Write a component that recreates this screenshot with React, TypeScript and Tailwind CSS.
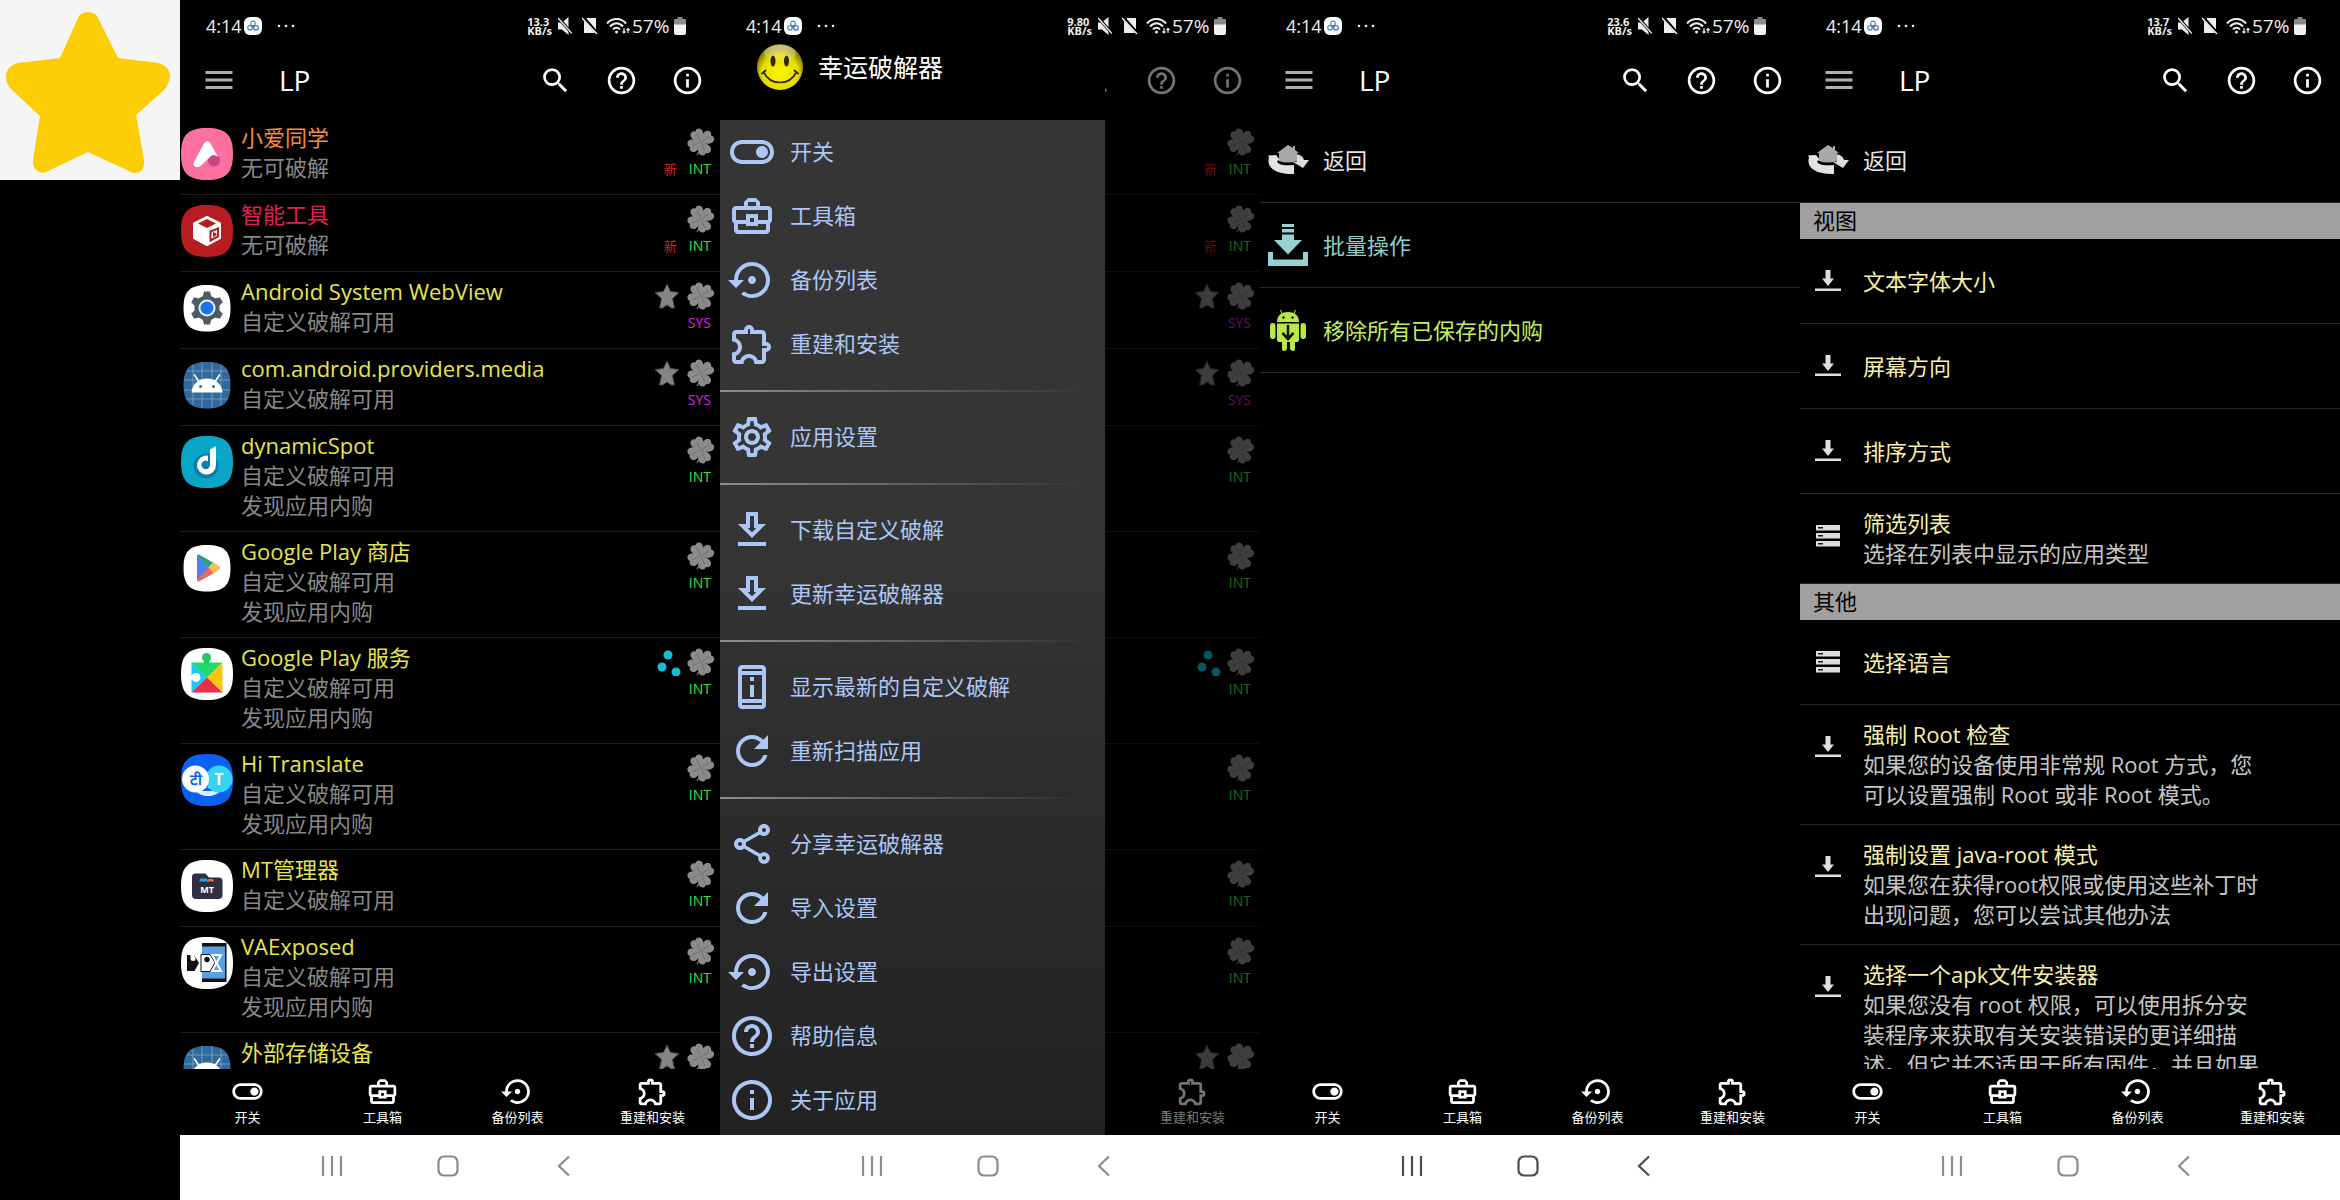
import type { ReactNode } from "react";
import type { IconType } from "react-icons";
import {
  MdHelpOutline,
  MdInfoOutline,
  MdMenu,
  MdOutlineBusinessCenter,
  MdOutlineExtension,
  MdOutlineGetApp,
  MdOutlinePermDeviceInformation,
  MdOutlineSettings,
  MdOutlineShare,
  MdOutlineToggleOn,
  MdRefresh,
  MdSearch,
  MdSettingsBackupRestore,
} from "react-icons/md";

// ---------- app icons (52 x 52) ----------

const squircle = "M26 0C45 0 52 7 52 26S45 52 26 52 0 45 0 26 7 0 26 0Z";
const smallSquircle = "M26 3C43 3 49.500 9 49.500 26S43 49.500 26 49.500 2.500 43 2.500 26 9 3 26 3Z";

const AppIcon = ({ children }: { children: ReactNode }) => (
  <svg viewBox="0 0 52 52" className="size-[52px] shrink-0" aria-hidden="true">
    {children}
  </svg>
);

const XiaoAiIcon = () => (
  <AppIcon>
    <path d={squircle} fill="#fb6fa1" />
    <circle cx="33" cy="32.500" r="6" fill="#c84482" />
    <path
      d="M23 15.500Q26 11 29.500 15.500L37 29Q32 24.500 27.500 30.500L20 37.500Q17 40 14 38.500 12 37 13 34Z"
      fill="#fff"
    />
  </AppIcon>
);

const SmartToolsIcon = () => (
  <AppIcon>
    <path d={squircle} fill="#b71c22" />
    <path d="M26 12l13 6.500v14.500L26 40l-13-7V18.500z" fill="#fff" stroke="#fff" strokeWidth="2" strokeLinejoin="round" />
    <path d="M26 14l9 4.500-9 4.500-9-4.500z" fill="#b71c22" />
    <path d="M29.500 26.500l7.500-3v8l-7.500 4z" fill="#fff" stroke="#b71c22" strokeWidth="2" />
    <path d="M32.500 27.500v4l3-2z" fill="#b71c22" stroke="#b71c22" />
  </AppIcon>
);

const WebViewIcon = () => (
  <AppIcon>
    <path d={smallSquircle} fill="#fff" />
    <g fill="#4d5a64">
      <circle cx="26" cy="26" r="12.500" />
      {[0, 60, 120, 180, 240, 300].map((deg) => (
        <path key={deg} d="M21.500 15.500L23 9.500h6l1.500 6z" transform={`rotate(${deg} 26 26)`} />
      ))}
    </g>
    <circle cx="26" cy="26" r="8.500" fill="#e8eef8" />
    <circle cx="26" cy="26" r="6.500" fill="#1a73e8" />
  </AppIcon>
);

const AndroidGridIcon = () => (
  <AppIcon>
    <path d={smallSquircle} fill="#33689a" />
    <path
      d="M12 6v40M21 3v46M31 3v46M40 6v40M6 12h40M3 21h46M3 31h46M6 40h40"
      stroke="#7ba6cc"
      strokeWidth=".8"
      fill="none"
    />
    <path d="M10.500 33.500c.5-8.500 7-14 15.500-14s15 5.500 15.500 14z" fill="#fff" />
    <path d="M17.500 22l-4-6M34.500 22l4-6" stroke="#fff" strokeWidth="1.600" strokeLinecap="round" />
    <circle cx="19.500" cy="27.500" r="1.500" fill="#33689a" />
    <circle cx="32.500" cy="27.500" r="1.500" fill="#33689a" />
  </AppIcon>
);

const DynamicSpotIcon = () => (
  <AppIcon>
    <path d={squircle} fill="#0aa6c8" />
    <circle cx="25" cy="30" r="12.500" fill="#0b6f9a" opacity=".7" />
    <path d="M29 13.500l6-3.500v19a9.500 9.500 0 1 1-8-9.300v5.500a4.300 4.300 0 1 0 2 3.800z" fill="#fff" />
  </AppIcon>
);

const PlayStoreIcon = () => (
  <AppIcon>
    <path d={smallSquircle} fill="#fff" />
    <path d="M16 13.500v25L28.500 26z" fill="#4c82ee" />
    <path d="M16 14c0-1.500 1.500-2 2.500-1.300L32 20.500 28.500 26 16 14z" fill="#2aa17c" />
    <path d="M32 20l6.500 4.500c1 .7 1 2.300 0 3L32 32l-5-6z" fill="#f7c04c" />
    <path d="M16 38c0 1.500 1.500 2 2.500 1.300L32.500 31.500 28 25.500z" fill="#ea6a68" />
  </AppIcon>
);

const PlayServicesIcon = () => (
  <AppIcon>
    <path d={squircle} fill="#fff" />
    <path d="M10.500 14.500h31L26 30z" fill="#1fdc6a" />
    <circle cx="25.500" cy="9.500" r="4.500" fill="#1fc866" />
    <path d="M23 10h5v6h-5z" fill="#1fc866" />
    <path d="M10.500 14.500v30L26 29.500z" fill="#1ec8ee" />
    <circle cx="15" cy="29.500" r="4.500" fill="#fff" />
    <path d="M9 27.500h6v4H9z" fill="#fff" />
    <path d="M41.500 14.500v30L26 29.500z" fill="#fdc60e" />
    <path d="M10.500 44.500h31L26 29.500z" fill="#e92f45" />
  </AppIcon>
);

const HiTranslateIcon = () => (
  <AppIcon>
    <path d={squircle} fill="#0a62f5" />
    <path d="M14 36c6 8 20 8 26 0l-6-3H20z" fill="#d8f2ff" />
    <path d="M18 37l8-4 7 4z" fill="#0a62f5" />
    <circle cx="38" cy="25" r="13.500" fill="#38d2f5" />
    <circle cx="14.500" cy="25" r="13.500" fill="#fff" />
    <text x="14.500" y="31" fontSize="15" fontWeight="700" textAnchor="middle" fill="#0a62f5">
      टी
    </text>
    <text x="38" y="31" fontSize="16" fontWeight="700" textAnchor="middle" fill="#fff">
      T
    </text>
  </AppIcon>
);

const MtManagerIcon = () => (
  <AppIcon>
    <path d={squircle} fill="#fff" />
    <path d="M11 17q0-3.500 3.500-3.500h10l3.500 4h10q3.500 0 3.500 3.500v14q0 4-4 4H15q-4 0-4-4z" fill="#302f42" />
    <path d="M18 21.500l1.500-3h6l2 3z" fill="#2aa6dc" />
    <path d="M26 21.500l1-2.500h4.500l2 2.500z" fill="#e86a50" />
    <text x="26" y="33" fontSize="9" fontWeight="700" textAnchor="middle" fill="#fff">
      MT
    </text>
  </AppIcon>
);

const VaExposedIcon = () => (
  <AppIcon>
    <path d={squircle} fill="#fff" />
    <path d="M21 6.500h24v38.500H21z" fill="#5aa0e6" />
    <path d="M21 6h24v3.500H21zM21 41.500h24V45H21zM44 6h1.500v39H44z" fill="#111" />
    <path d="M20 17.500h9l5 8-5 9h-9z" fill="#fff" stroke="#111" />
    <path d="M6 18h3.500v3.500a2.500 2.500 0 0 0 5 0L13 18l5 8-4.500 8H6z" fill="#111" />
    <circle cx="26" cy="22.500" r="2.700" fill="#111" />
    <path d="M31 18h9L31 34h9z" fill="none" stroke="#fff" strokeWidth="2" />
  </AppIcon>
);

// ---------- small drawings ----------

const Clover = () => (
  <svg viewBox="0 0 28 28" className="size-7" aria-hidden="true">
    <path d="M14 14q0 7-4 13" stroke="#6c6c6c" strokeWidth="1.500" fill="none" />
    {[-28, 57, 156, 246].map((deg) => (
      <g key={deg} transform={`rotate(${deg} 14 14)`}>
        <path
          d="M14 13.800C10.500 12 7.500 8.500 7.500 4.800 7.500.8 12 -.5 14 2 16-.5 20.500.8 20.500 4.800 20.500 8.500 17.500 12 14 13.800Z"
          fill="#8b8b8b"
        />
        <path d="M14 12V4.500" stroke="#6a6a6a" strokeWidth=".8" />
      </g>
    ))}
  </svg>
);

const FavoriteStar = () => (
  <svg viewBox="0 0 28 28" className="size-7" aria-hidden="true">
    <path
      d="M14 2l3.500 7.500 8.500 1-6.500 6 2 9.500h-3L14 23l-4.500 3h-3l2-9.500L2 10.500l8.500-1z"
      fill="#858585"
      stroke="#4a4a4a"
      strokeLinejoin="round"
    />
  </svg>
);

const LoadingDots = () => (
  <svg viewBox="0 0 28 28" className="size-7" fill="#14bcd4" aria-hidden="true">
    <circle cx="15" cy="7" r="4.500" />
    <circle cx="9" cy="19" r="4.500" />
    <circle cx="23" cy="24" r="4.500" />
  </svg>
);

const SmileyIcon = () => (
  <svg viewBox="0 0 46 46" className="size-[46px]" aria-hidden="true">
    <defs>
      <radialGradient id="smiley" cx="50%" cy="62%" r="55%">
        <stop offset="0" stopColor="#fff600" />
        <stop offset=".7" stopColor="#e6dc00" />
        <stop offset="1" stopColor="#8a8000" />
      </radialGradient>
      <linearGradient id="shine" x1="0" y1="0" x2="0" y2="1">
        <stop offset="0" stopColor="#fff" stopOpacity=".6" />
        <stop offset="1" stopColor="#fff" stopOpacity="0" />
      </linearGradient>
    </defs>
    <circle cx="23" cy="23" r="23" fill="url(#smiley)" />
    <ellipse cx="23" cy="10" rx="16" ry="9" fill="url(#shine)" />
    <ellipse cx="16" cy="17" rx="2.500" ry="5.500" fill="#2c2a00" />
    <ellipse cx="29.500" cy="17" rx="2.500" ry="5.500" fill="#2c2a00" />
    <path d="M6.500 28c7 14 26 14 33 0M5 29.500l3.500-3M37.500 26.500l3.500 3" stroke="#2c2a00" strokeWidth="1.700" fill="none" strokeLinecap="round" />
  </svg>
);

const BackHomeIcon = () => (
  <svg viewBox="0 0 42 42" className="size-[42px]" aria-hidden="true">
    <path d="M9 16L1 16.500l1 2C-1 28 8 35.500 27 35v-9c-10 1-16 0-17-4l3-1z" fill="#e2e2e2" />
    <path d="M27 15c5 0 9 2 10 6h5l-6 8-10-6h4c-1-2-2-3-4-4z" fill="#dcdcdc" />
    <path d="M21 6L10 14h2v8q9 3 18 0v-8h2l-4-3V7h-2v2z" fill="#a9a9a9" />
  </svg>
);

const BatchIcon = () => (
  <svg viewBox="0 0 42 42" className="size-[42px]" fill="#96d2d2" aria-hidden="true">
    <path d="M15 0h12v3H15zM15 5h12v3.500H15zM15 10.500h12V16h8L21 30.500 7 16h8zM1 28h5v7.500h30V28h5v14H1z" />
  </svg>
);

const RobotIcon = () => (
  <svg viewBox="0 0 42 42" className="size-[42px]" fill="#b9e84a" aria-hidden="true">
    <path d="M10 13C10 6 15 3 21 3s11 3 11 10z" />
    <path d="M15 5L13.500 1M27 5l1.500-4" stroke="#b9e84a" />
    <circle cx="16.500" cy="8.500" r="1.200" fill="#000" />
    <circle cx="25.500" cy="8.500" r="1.200" fill="#000" />
    <path d="M10 14.500h22V31q0 2-2 2h-2v7q0 2-2 2t-3-2v-7h-3v7q-1 2-3 2t-2-2v-7h-3q-2 0-2-2z" />
    <rect x="3" y="14" width="5.500" height="16" rx="2.700" />
    <rect x="33.500" y="14" width="5.500" height="16" rx="2.700" />
    <path d="M21 16v13M15.500 24l5.500 6 5.500-6" stroke="#101800" strokeWidth="2.600" fill="none" />
  </svg>
);

const ArrowDownIcon = () => (
  <svg viewBox="0 0 26 22" className="h-[22px] w-[26px]" fill="#dedede" aria-hidden="true">
    <path d="M10.500 0h5v8.500H19L13 16 7 8.500h3.500zM0 18.500h26V21H0z" />
  </svg>
);

const StorageIcon = () => (
  <svg viewBox="0 0 24 22" className="h-[22px] w-6" aria-hidden="true">
    <path d="M0 0h24v5.500H0zM0 8h24v5.500H0zM0 16h24v5.500H0z" fill="#dedede" />
    <path d="M2 2h5v1.500H2zM2 10h5v1.500H2zM2 18h5v1.500H2z" fill="#111" />
  </svg>
);

// ---------- phone chrome ----------

const StatusBar = ({ speed }: { speed: string }) => (
  <header className="flex h-10 shrink-0 items-center pt-3 pr-[34px] pl-[26px] text-[#f0f0f0]">
    <span className="w-[38px] text-[18px] leading-7">4:14</span>
    <svg viewBox="0 0 18 18" className="size-[18px]" fill="none" aria-hidden="true">
      <rect width="18" height="18" rx="6" fill="#fff" />
      <circle cx="9" cy="6.500" r="2.300" stroke="#2a9fd0" strokeWidth="1.200" />
      <circle cx="6" cy="10.800" r="2.300" stroke="#2a8fd0" strokeWidth="1.200" />
      <circle cx="12" cy="10.800" r="2.300" stroke="#2a6fd0" strokeWidth="1.200" />
      <path d="M7 8.500l2 1.500 2-1.500" stroke="#d03a5a" strokeWidth="1.200" />
    </svg>
    <svg viewBox="0 0 18 4" className="ml-[15px] h-1 w-[18px]" fill="#eee" aria-hidden="true">
      <circle cx="2" cy="2" r="1.300" />
      <circle cx="9" cy="2" r="1.300" />
      <circle cx="16" cy="2" r="1.300" />
    </svg>
    <div className="ml-auto flex items-center">
      <div className="mr-[6px] text-[11px] leading-[9px] font-bold">
        {speed}
        <br />
        KB/s
      </div>
      <svg viewBox="0 0 14 18" className="mr-[10px] h-[18px] w-[14px]" aria-hidden="true">
        <path d="M0 5.500h4L10.500 0v18L4 12.500H0z" fill="#eee" />
        <path d="M1 1.500l13 15" stroke="#000" strokeWidth="3" />
        <path d="M0 1l14 15.500" stroke="#eee" strokeWidth="1.500" />
      </svg>
      <svg viewBox="0 0 16 18" className="mr-2 h-[18px] w-4" aria-hidden="true">
        <path d="M5 1h9v15H2V4.500z" fill="#eee" />
        <path d="M1 0l15 17" stroke="#000" strokeWidth="3" />
        <path d="M0 1l15 16" stroke="#eee" strokeWidth="1.500" />
      </svg>
      <svg viewBox="0 0 24 18" className="mr-[2px] h-[18px] w-6" fill="none" stroke="#eee" aria-hidden="true">
        <path d="M1 6.500C6 .5 15 .5 20 6.500M4 9.500c4-4.500 9-4.500 13 0M7 12.500c2-2.500 5-2.500 7 0" strokeWidth="2" />
        <circle cx="10.500" cy="15" r="1.500" fill="#eee" stroke="none" />
        <path d="M18 11v5M16.500 14.500L18 16l1.500-1.500M22 16v-4M20.500 13L22 11.500l1.500 1.500" strokeWidth="1.200" />
      </svg>
      <span className="w-[42px] text-[19px] leading-7">57%</span>
      <svg viewBox="0 0 12 18" className="h-[18px] w-3" aria-hidden="true">
        <path d="M3.500 0h5v2H11q1 0 1 1v5H0V3q0-1 1-1h2.500z" fill="#8a8a8a" />
        <path d="M0 7.500h12V16q0 2-2 2H2q-2 0-2-2z" fill="#f2f2f2" />
      </svg>
    </div>
  </header>
);

const AppBar = () => (
  <div className="flex h-[78px] shrink-0 items-center px-4 pt-[2px] text-white">
    <button aria-label="菜单" className="ml-[5px] group-data-[drawer=open]:invisible">
      <MdMenu className="size-9 text-[#b0b0b0]" />
    </button>
    <h1 className="ml-[42px] text-[28px] leading-9 group-data-[drawer=open]:invisible">LP</h1>
    <div className="ml-auto flex gap-[33px]">
      <button aria-label="搜索">
        <MdSearch className="size-[33px]" />
      </button>
      <button aria-label="帮助">
        <MdHelpOutline className="size-[33px]" />
      </button>
      <button aria-label="关于">
        <MdInfoOutline className="size-[33px]" />
      </button>
    </div>
  </div>
);

const tabs: { label: string; Icon: IconType }[] = [
  { label: "开关", Icon: MdOutlineToggleOn },
  { label: "工具箱", Icon: MdOutlineBusinessCenter },
  { label: "备份列表", Icon: MdSettingsBackupRestore },
  { label: "重建和安装", Icon: MdOutlineExtension },
];

// with the drawer open only the last tab stays in sight
const BottomTabs = () => (
  <nav className="grid h-[66px] shrink-0 grid-cols-4 text-white">
    {tabs.map(({ label, Icon }) => (
      <button
        key={label}
        className="flex flex-col items-center pt-[6px] not-last:group-data-[drawer=open]:invisible"
      >
        <Icon className="size-[33px]" />
        <span className="text-[13px] leading-[18px]">{label}</span>
      </button>
    ))}
  </nav>
);

const SystemNav = ({ dark }: { dark?: boolean }) => (
  <div
    className={`flex h-[65px] shrink-0 items-center justify-center gap-[92px] bg-white pr-1 pb-[3px] ${
      dark ? "text-[#4c4c4c]" : "text-[#8c8c8c]"
    }`}
  >
    <button aria-label="最近">
      <svg viewBox="0 0 24 24" className="size-6" stroke="currentColor" strokeWidth="2.200" aria-hidden="true">
        <path d="M3 2v20M12 2v20M21 2v20" />
      </svg>
    </button>
    <button aria-label="主屏幕">
      <svg viewBox="0 0 24 24" className="size-6" stroke="currentColor" strokeWidth="2.200" fill="none" aria-hidden="true">
        <rect x="2.500" y="2.500" width="19" height="19" rx="5.500" />
      </svg>
    </button>
    <button aria-label="返回">
      <svg viewBox="0 0 24 24" className="size-6" stroke="currentColor" strokeWidth="2.200" fill="none" aria-hidden="true">
        <path d="M17 2.500L7 12l10 9.500" />
      </svg>
    </button>
  </div>
);

type PhoneProps = {
  speed: string;
  darkNav?: boolean;
  drawer?: ReactNode;
  children: ReactNode;
};

const Phone = ({ speed, darkNav, drawer, children }: PhoneProps) => (
  <section className="group flex min-h-0 min-w-0 flex-col" data-drawer={drawer ? "open" : undefined}>
    <StatusBar speed={speed} />
    <div className="relative flex min-h-0 flex-1 flex-col">
      <AppBar />
      <div className="min-h-0 flex-1 overflow-hidden">{children}</div>
      <BottomTabs />
      {drawer}
    </div>
    <SystemNav dark={darkNav} />
  </section>
);

// ---------- app list ----------

type AppRow = {
  name: string;
  color?: string;
  lines: string[];
  Icon: () => ReactNode;
  system?: boolean;
  isNew?: boolean;
  loading?: boolean;
};

const CUSTOM = "自定义破解可用";
const IAP = "发现应用内购";

const apps: AppRow[] = [
  { name: "小爱同学", color: "text-[#f58b3c]", lines: ["无可破解"], Icon: XiaoAiIcon, isNew: true },
  { name: "智能工具", color: "text-[#e01e5a]", lines: ["无可破解"], Icon: SmartToolsIcon, isNew: true },
  { name: "Android System WebView", lines: [CUSTOM], Icon: WebViewIcon, system: true },
  { name: "com.android.providers.media", lines: [CUSTOM], Icon: AndroidGridIcon, system: true },
  { name: "dynamicSpot", lines: [CUSTOM, IAP], Icon: DynamicSpotIcon },
  { name: "Google Play 商店", lines: [CUSTOM, IAP], Icon: PlayStoreIcon },
  { name: "Google Play 服务", lines: [CUSTOM, IAP], Icon: PlayServicesIcon, loading: true },
  { name: "Hi Translate", lines: [CUSTOM, IAP], Icon: HiTranslateIcon },
  { name: "MT管理器", lines: [CUSTOM], Icon: MtManagerIcon },
  { name: "VAExposed", lines: [CUSTOM, IAP], Icon: VaExposedIcon },
  { name: "外部存储设备", lines: [CUSTOM], Icon: AndroidGridIcon, system: true },
];

const AppList = () => (
  <ul>
    {apps.map(({ name, color, lines, Icon, system, isNew, loading }) => (
      <li key={name} className="flex border-b border-[#1e1e1e] pr-[5px] pl-px">
        <div className="pt-[10px] group-data-[drawer=open]:invisible">
          <Icon />
        </div>
        <div
          className={`ml-2 flex-1 pt-1 text-[22px] leading-[30px] group-data-[drawer=open]:invisible ${
            lines.length > 1 ? "pb-[11px]" : "pb-3"
          }`}
        >
          <h2 className={color ?? "text-[#e6e64c]"}>{name}</h2>
          {lines.map((line) => (
            <p key={line} className="text-[#888888]">
              {line}
            </p>
          ))}
        </div>
        <div className="pt-[10px]">
          <div className="flex justify-end gap-[6px]">
            {system && <FavoriteStar />}
            {loading && <LoadingDots />}
            <Clover />
          </div>
          <div className="flex items-center justify-end gap-3 pr-1 text-[14px] leading-[26px]">
            {isNew && <span className="text-[13px] text-[#d42020]">新</span>}
            {system ? <span className="text-[#e01fe0]">SYS</span> : <span className="text-[#2fe63c]">INT</span>}
          </div>
        </div>
      </li>
    ))}
  </ul>
);

// ---------- side drawer ----------

const drawerGroups: { label: string; Icon: IconType }[][] = [
  [
    { label: "开关", Icon: MdOutlineToggleOn },
    { label: "工具箱", Icon: MdOutlineBusinessCenter },
    { label: "备份列表", Icon: MdSettingsBackupRestore },
    { label: "重建和安装", Icon: MdOutlineExtension },
  ],
  [{ label: "应用设置", Icon: MdOutlineSettings }],
  [
    { label: "下载自定义破解", Icon: MdOutlineGetApp },
    { label: "更新幸运破解器", Icon: MdOutlineGetApp },
  ],
  [
    { label: "显示最新的自定义破解", Icon: MdOutlinePermDeviceInformation },
    { label: "重新扫描应用", Icon: MdRefresh },
  ],
  [
    { label: "分享幸运破解器", Icon: MdOutlineShare },
    { label: "导入设置", Icon: MdRefresh },
    { label: "导出设置", Icon: MdSettingsBackupRestore },
    { label: "帮助信息", Icon: MdHelpOutline },
    { label: "关于应用", Icon: MdInfoOutline },
  ],
];

const Drawer = () => (
  <div className="absolute inset-0 bg-black/55">
    <aside className="flex h-full w-[385px] flex-col bg-black">
      <div className="flex h-20 shrink-0 items-start gap-[15px] pt-1 pl-[37px]">
        <SmileyIcon />
        <h2 className="text-[25px] leading-[46px] text-white">幸运破解器</h2>
      </div>
      <nav className="min-h-0 flex-1 overflow-hidden bg-linear-to-b from-[#353535] from-40% to-[#222222]">
        {drawerGroups.map((group, i) => (
          <div key={group[0].label}>
            {i > 0 && (
              <div className="flex h-[29px] items-center">
                <div className="h-[2px] w-full bg-linear-to-r from-[#8e8e8e] to-transparent to-95%" />
              </div>
            )}
            {group.map(({ label, Icon }) => (
              <button key={label} className="flex h-16 w-full items-center gap-[14px] pl-2 text-[#adc6f5]">
                <Icon className="size-12" />
                <span className="pb-[2px] text-[22px] leading-[30px]">{label}</span>
              </button>
            ))}
          </div>
        ))}
      </nav>
    </aside>
  </div>
);

// ---------- option rows shared by the toolbox and settings ----------

type OptionProps = {
  icon: ReactNode;
  title: string;
  color?: string;
  detail?: string;
};

const Option = ({ icon, title, color, detail }: OptionProps) => (
  <button className="flex min-h-[85px] w-full border-b border-[#2b2b2b] text-left text-[22px] leading-[30px]">
    <span className="flex h-[84px] w-14 shrink-0 items-center justify-center">{icon}</span>
    <span className="ml-[7px] self-center pt-[14px] pb-[15px]">
      <span className={`block ${color ?? "text-[#f8f0a4]"}`}>{title}</span>
      {detail && <span className="block whitespace-pre text-[#c6c6c6]">{detail}</span>}
    </span>
  </button>
);

const SectionTitle = ({ children }: { children: string }) => (
  <h2 className="h-9 bg-[#a0a0a0] pl-[13px] text-[22px] leading-[34px] text-black">{children}</h2>
);

const BackOption = () => <Option icon={<BackHomeIcon />} title="返回" color="text-[#e6e6e6]" />;

const Toolbox = () => (
  <>
    <BackOption />
    <Option icon={<BatchIcon />} title="批量操作" color="text-[#8fcfca]" />
    <Option icon={<RobotIcon />} title="移除所有已保存的内购" color="text-[#c4f05c]" />
  </>
);

const Settings = () => (
  <>
    <BackOption />
    <SectionTitle>视图</SectionTitle>
    <Option icon={<ArrowDownIcon />} title="文本字体大小" />
    <Option icon={<ArrowDownIcon />} title="屏幕方向" />
    <Option icon={<ArrowDownIcon />} title="排序方式" />
    <Option icon={<StorageIcon />} title="筛选列表" detail="选择在列表中显示的应用类型" />
    <SectionTitle>其他</SectionTitle>
    <Option icon={<StorageIcon />} title="选择语言" />
    <Option
      icon={<ArrowDownIcon />}
      title="强制 Root 检查"
      detail={"如果您的设备使用非常规 Root 方式，您\n可以设置强制 Root 或非 Root 模式。"}
    />
    <Option
      icon={<ArrowDownIcon />}
      title="强制设置 java-root 模式"
      detail={"如果您在获得root权限或使用这些补丁时\n出现问题，您可以尝试其他办法"}
    />
    <Option
      icon={<ArrowDownIcon />}
      title="选择一个apk文件安装器"
      detail={"如果您没有 root 权限，可以使用拆分安\n装程序来获取有关安装错误的更详细描\n述。但它并不适用于所有固件，并且如果"}
    />
  </>
);

const App = () => (
  <main
    lang="zh-CN"
    className="grid h-screen grid-cols-[1fr_3fr_3fr_3fr_3fr] bg-black font-['Open_Sans','Noto_Sans_CJK_SC',sans-serif]"
  >
    <div>
      <svg viewBox="0 0 180 180" className="aspect-square w-full bg-[#f5f5f5]" role="img" aria-label="收藏">
        <path
          d="M78 18Q80 12 88 12T98 18L118 58 158 63Q170 66 170 77 169 84 164 90L136 115 144 160Q145 173 134 173 131 173 127 170L88 152 50 170Q46 173 43 173 32 171 33 160L40 116 12 90Q6 84 6 77 6 66 18 63L60 58Z"
          fill="#fccc04"
        />
      </svg>
    </div>
    <Phone speed="13.3">
      <AppList />
    </Phone>
    <Phone speed="9.80" drawer={<Drawer />}>
      <AppList />
    </Phone>
    <Phone speed="23.6" darkNav>
      <Toolbox />
    </Phone>
    <Phone speed="13.7">
      <Settings />
    </Phone>
  </main>
);

export default App;
